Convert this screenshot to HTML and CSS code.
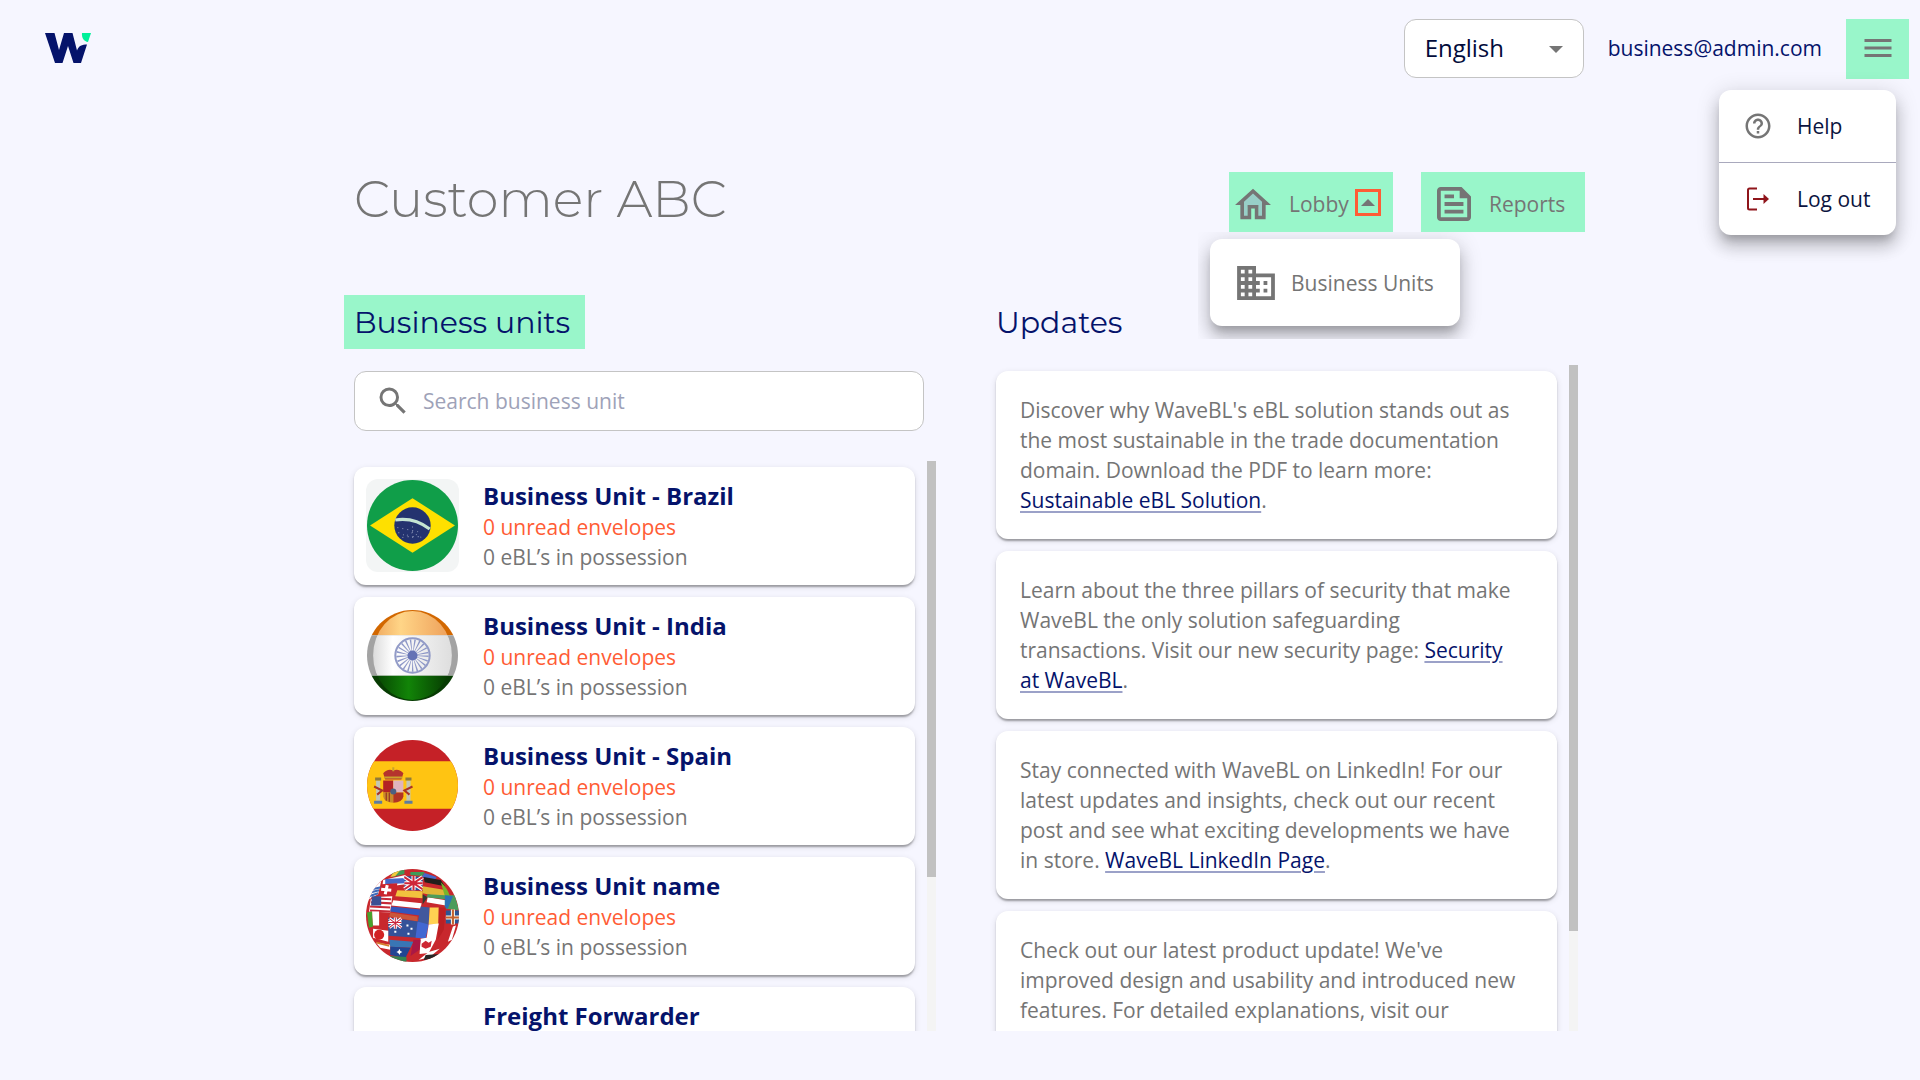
FILE: index.html
```html
<!DOCTYPE html>
<html lang="en">
<head>
    <meta charset="UTF-8">
    <meta name="viewport" content="width=device-width, initial-scale=1.0">
    <title>Customer ABC - Lobby</title>
    <link rel="stylesheet" href="styles.css">
</head>
<body>
    <header class="topbar">
        <a href="#" class="logo" aria-label="Home">
            <svg width="46" height="30" viewBox="0 0 46 30">
                <path fill="#05136b" d="M0 0h9.5L14 17 19 0h8.500L32 17.500C33.500 13 37 11.500 42 11.500L36 30h-7.500L23 13 17.500 30H10z"/>
                <path fill="#00f09a" d="M37 0h9l-3 9c-4-.5-6.500-4-6-9z"/>
            </svg>
        </a>
        <div class="account">
            <div class="language">
                <select aria-label="Language">
                    <option>English</option>
                </select>
                <svg width="14" height="7" viewBox="0 0 14 7"><path d="M0 0h14L7 7z"/></svg>
            </div>
            <span class="email">business@admin.com</span>
            <div class="menu-wrap">
                <button class="menu-btn" aria-label="Menu">
                    <svg width="36" height="36" viewBox="0 0 24 24"><path d="M3 18h18v-2H3v2zm0-5h18v-2H3v2zm0-7v2h18V6H3z"/></svg>
                </button>
                <div class="user-menu">
                    <a href="#">
                        <svg width="30" height="30" viewBox="0 0 24 24"><path d="M11 18h2v-2h-2v2zm1-16C6.480 2 2 6.480 2 12s4.480 10 10 10 10-4.480 10-10S17.520 2 12 2zm0 18c-4.410 0-8-3.590-8-8s3.590-8 8-8 8 3.590 8 8-3.590 8-8 8zm0-14c-2.210 0-4 1.790-4 4h2c0-1.100.9-2 2-2s2 .9 2 2c0 2-3 1.750-3 5h2c0-2.250 3-2.500 3-5 0-2.210-1.790-4-4-4z"/></svg>
                        Help
                    </a>
                    <a href="#">
                        <svg width="30" height="30" viewBox="0 0 30 30"><path fill="none" stroke="#8f151b" stroke-width="2" d="M14 4.500H6.500Q5 4.500 5 6v18Q5 25.500 6.500 25.500H14M10 15h12"/><path fill="#8f151b" d="M20.500 10l5.500 5-5.500 5z"/></svg>
                        Log out
                    </a>
                </div>
            </div>
        </div>
    </header>

    <main>
        <div class="title-row">
            <h1>Customer ABC</h1>
            <nav>
                <div class="nav-item lobby">
                    <a href="#">
                        <svg width="36" height="32" viewBox="2 3 20 17"><path fill="#98cfc8" d="M12 4l7 7v8h-4v-6H9v6H5v-8z"/><path d="M12 5.690l5 4.500V18h-2v-6H9v6H7v-7.810l5-4.500M12 3L2 12h3v8h6v-6h2v6h6v-8h3L12 3z"/></svg>
                        Lobby
                    </a>
                    <button class="caret" aria-label="Show lobby pages">
                        <svg width="14" height="7" viewBox="0 0 14 7"><path d="M0 7h14L7 0z"/></svg>
                    </button>
                    <div class="submenu">
                        <a href="#">
                            <svg width="38" height="34" viewBox="2 3 20 18"><path d="M12 7V3H2v18h20V7H12zM6 19H4v-2h2v2zm0-4H4v-2h2v2zm0-4H4V9h2v2zm0-4H4V5h2v2zm4 12H8v-2h2v2zm0-4H8v-2h2v2zm0-4H8V9h2v2zm0-4H8V5h2v2zm10 12h-8v-2h2v-2h-2v-2h2v-2h-2V9h8v10zm-2-8h-2v2h2v-2zm0 4h-2v2h2v-2z"/></svg>
                            Business Units
                        </a>
                    </div>
                </div>
                <div class="nav-item reports">
                    <a href="#">
                        <svg width="34" height="34" viewBox="3 3 18 18"><path d="M16 3H5c-1.100 0-2 .9-2 2v14c0 1.100.9 2 2 2h14c1.100 0 2-.9 2-2V8l-5-5zm3 16H5V5h10v4h4v10zM7 17h10v-2H7v2zm5-10H7v2h5V7zm-5 6h10v-2H7v2z"/></svg>
                        Reports
                    </a>
                </div>
            </nav>
        </div>

        <div class="columns">
            <section class="units">
                <h2 class="marked">Business units</h2>
                <label class="search">
                    <svg width="36" height="36" viewBox="0 0 24 24"><path d="M15.500 14h-.79l-.28-.27A6.471 6.471 0 0 0 16 9.500 6.500 6.500 0 1 0 9.500 16c1.610 0 3.090-.59 4.230-1.570l.27.28v.79l5 4.990L20.490 19l-4.990-5zm-6 0C7.010 14 5 11.990 5 9.500S7.010 5 9.500 5 14 7.010 14 9.500 11.990 14 9.500 14z"/></svg>
                    <input type="text" placeholder="Search business unit" aria-label="Search business unit">
                </label>
                <div class="scroll-area">
                    <div class="list">
                        <article class="card unit">
                            <svg class="flag brazil" viewBox="0 0 92 92">
                                <circle cx="46" cy="46" r="45" fill="#109e49"/>
                                <path fill="#fee000" d="M4 46l42-27 42 27-42 27z"/>
                                <circle cx="46" cy="46" r="18" fill="#24336f"/>
                                <path fill="none" stroke="#c5e5d3" stroke-width="3" d="M29 40.500c13-2 25 2 34 9"/>
                                <path fill="none" stroke="#8b95b8" stroke-width="1" stroke-dasharray="1 4" d="M31 48l10 2 14 3M32 53l9 4 15 0M36 58l10-5 11 6M46 47v14"/>
                            </svg>
                            <div>
                                <h3>Business Unit - Brazil</h3>
                                <p class="unread">0 unread envelopes</p>
                                <p>0 eBL’s in possession</p>
                            </div>
                        </article>
                        <article class="card unit">
                            <svg class="flag" viewBox="0 0 92 92">
                                <defs>
                                    <clipPath id="disc"><circle cx="46" cy="46" r="45"/></clipPath>
                                    <clipPath id="lens"><ellipse cx="46" cy="46" rx="39" ry="44"/></clipPath>
                                    <linearGradient id="saffron"><stop offset="0" stop-color="#efa75d"/><stop offset=".35" stop-color="#ffd587"/><stop offset="1" stop-color="#ed9d58"/></linearGradient>
                                    <linearGradient id="silver"><stop offset="0" stop-color="#dcdcdc"/><stop offset=".25" stop-color="#fff"/><stop offset="1" stop-color="#dedede"/></linearGradient>
                                    <linearGradient id="green"><stop offset="0" stop-color="#063f02"/><stop offset=".45" stop-color="#128408"/><stop offset="1" stop-color="#053501"/></linearGradient>
                                </defs>
                                <g clip-path="url(#disc)">
                                    <path fill="#d26700" d="M0 0h92v26H0z"/>
                                    <path fill="#a3a3a3" d="M0 26h92v40H0z"/>
                                    <path fill="#073c03" d="M0 66h92v26H0z"/>
                                </g>
                                <g clip-path="url(#lens)">
                                    <path fill="url(#saffron)" d="M7 0h78v26H7z"/>
                                    <path fill="url(#silver)" d="M7 26h78v40H7z"/>
                                    <path fill="url(#green)" d="M7 66h78v26H7z"/>
                                </g>
                                <circle cx="46" cy="46" r="17" fill="none" stroke="#929bc7" stroke-width="2"/>
                                <circle cx="46" cy="46" r="10" fill="none" stroke="#8d97c7" stroke-width="12" stroke-dasharray="1 2"/>
                                <circle cx="46" cy="46" r="5" fill="#6573b5"/>
                            </svg>
                            <div>
                                <h3>Business Unit - India</h3>
                                <p class="unread">0 unread envelopes</p>
                                <p>0 eBL’s in possession</p>
                            </div>
                        </article>
                        <article class="card unit">
                            <svg class="flag" viewBox="0 0 92 92">
                                <g clip-path="url(#disc)">
                                    <path fill="#c52127" d="M0 0h92v92H0z"/>
                                    <path fill="#ffc412" d="M0 22h92v47H0z"/>
                                </g>
                                <path fill="#b5332d" d="M17 34q4-5 10-3 6-2 10 3l-2 6H19z"/>
                                <path fill="#caa22c" d="M18 37h18v2H18zM26 28h2v4h-2z"/>
                                <path fill="#b32224" d="M17 41h10v12H17z"/>
                                <path fill="#dfb4bd" d="M27 41h10v12H27z"/>
                                <path fill="#c98a2b" d="M17 53h10v10q-9 0-10-6z"/>
                                <path fill="#b13425" d="M27 53h10v4q-1 6-10 6z"/>
                                <path stroke="#8d2420" stroke-width="1" d="M20 53v8M23 53v9"/>
                                <circle cx="27" cy="52" r="3" fill="#4b6082"/>
                                <path fill="#c3c6b4" d="M10 41h4v20h-4zM40 41h4v20h-4z"/>
                                <path fill="#8f7a3b" d="M9 38h6v3H9zM39 38h6v3h-6z"/>
                                <path fill="#5d7ca0" d="M8 61h8v3H8zM38 61h8v3h-8z"/>
                                <path fill="none" stroke="#a93327" stroke-width="2" d="M8 47l8 4-5 4M46 47l-8 4 5 4"/>
                            </svg>
                            <div>
                                <h3>Business Unit - Spain</h3>
                                <p class="unread">0 unread envelopes</p>
                                <p>0 eBL’s in possession</p>
                            </div>
                        </article>
                        <article class="card unit">
                            <svg class="flag" viewBox="0 0 92 92">
                                <clipPath id="globe"><circle cx="46" cy="46" r="46"/></clipPath>
                                <g clip-path="url(#globe)">
                                    <path fill="#c8282d" d="M0 0h92v92H0z"/>
                                    <path fill="#3f9a58" d="M24 0h14v5l-12 3zM44 3h14l-2 4-12-1z"/>
                                    <path fill="#f5c93a" d="M30 0h5l-6 7-5 1z"/>
                                    <path fill="#fff" d="M17 11l22-5v9L16 18z"/>
                                    <path fill="#4668c8" d="M19 10l20-1v5l-20 1zM58 4l12 4-3 4-12-4z"/>
                                    <path fill="#2e4e96" d="M38 7l18 1v13H38z"/>
                                    <path stroke="#fff" stroke-width="4" d="M38 8l18 12M56 8L38 20M47 7v14M38 14h18"/>
                                    <path stroke="#cf2538" stroke-width="2" d="M38 8l18 12M56 8L38 20M47 7v14M38 14h18"/>
                                    <path fill="#221f1c" d="M57 8l17 3 4 6-20-4z"/>
                                    <path fill="#e0b637" d="M56 17l24 4v8l-24-5z"/>
                                    <path fill="#78b52b" d="M74 13q7 6 9 14h-5z"/>
                                    <path fill="#fff" d="M1 27q4-10 14-15l-3 13-9 5z"/>
                                    <path stroke="#4069b9" stroke-width="2" d="M6 20l9-2M5 23l8-2M3 27l9-3"/>
                                    <path fill="#c9242d" d="M15 15l16-1-2 13-17 1z"/>
                                    <path stroke="#fff" stroke-width="3" d="M21 16l-2 9M15 20l10 1"/>
                                    <path fill="#f2c33e" d="M31 21l25 1v7l-27-2z"/>
                                    <path fill="#353a31" d="M56 25l5 3-5 7z"/>
                                    <path fill="#fff" d="M61 28l18 3v5l-19-3z"/>
                                    <path fill="#4d9c5b" d="M61 25l17 1v4l-18-2zM78 26l10 0 4 15-14-2z"/>
                                    <path fill="#2b73b6" d="M78 26l8 1-5 12h-3z"/>
                                    <path fill="#fff" d="M5 28l21-1-2 16-21-1z"/>
                                    <path stroke="#c62a38" stroke-width="2" d="M5 29l20 1M5 33l20 1M4 37l20 1M4 41l20 1"/>
                                    <path fill="#3b4f94" d="M6 27h9v9H5z"/>
                                    <path fill="#fff" d="M27 31l28 3-1 5-29-3z"/>
                                    <path fill="#3356bd" d="M25 37l29 3-1 6-29-4z"/>
                                    <path fill="#ca563a" d="M24 43l27 4v5l-28-5z"/>
                                    <path fill="#41589d" d="M54 37l9 1-1 17-11-1z"/>
                                    <path fill="#ffd152" d="M63 38h9v17H62z"/>
                                    <path fill="#bc2024" d="M72 38h7l-2 22-6 10z"/>
                                    <path fill="#2c5595" d="M79 41h13v13H79z"/>
                                    <path stroke="#f6f5ed" stroke-width="4" d="M86 40v15M79 48h13"/>
                                    <path stroke="#c5622e" stroke-width="2" d="M86 40v15M79 48h13"/>
                                    <path fill="#48a12d" d="M1 43l5-1 1 15-4 1z"/>
                                    <path fill="#fff" d="M6 42h7v14H7z"/>
                                    <path fill="#355299" d="M22 48l30 4-1 16-29-2z"/>
                                    <path stroke="#fff" stroke-width="3" d="M23 49l12 9M35 49l-12 9M29 48v11M22 53h13"/>
                                    <path stroke="#c9243b" stroke-width="1" d="M23 49l12 9M35 49l-12 9M29 48v11M22 53h13"/>
                                    <path fill="#fff" d="M40 55h2v2h-2zM44 58h2v2h-2zM28 61h2v2h-2zM41 63h2v2h-2zM7 59l15 2v11l-15-4z"/>
                                    <circle cx="13" cy="65" r="5" fill="#d12223"/>
                                    <path fill="#4267d2" d="M51 52l11 3-3 14-10-1z"/>
                                    <path fill="#fff" d="M62 55l10-1-3 16-7 13-9 1 1-15 6-1zM86 57l3-1-4 14-4 2z"/>
                                    <path fill="#cd2733" d="M59 71l3 2 3-2-1 6-5 2-4-2v-3z"/>
                                    <path fill="#fff" d="M10 73l14 2v5l-10-2z"/>
                                    <path fill="#d57d2c" d="M10 72l13 3v2l-12-3z"/>
                                    <path fill="#3976b5" d="M23 70l24 2-3 6-20-1z"/>
                                    <path fill="#214593" d="M24 77l20 1-5 10-15-3z"/>
                                    <path fill="#fff" d="M33 79l1 2 2 1-2 1-1 2-1-2-2-1 2-1zM62 82l11-3-10 8-11 3z"/>
                                    <path fill="#a91845" d="M47 70h7l-1 10-9 6z"/>
                                    <path fill="#348552" d="M24 86l16 1v5H24z"/>
                                    <path fill="#262626" d="M59 85l14-1-8 5-8 1z"/>
                                </g>
                            </svg>
                            <div>
                                <h3>Business Unit name</h3>
                                <p class="unread">0 unread envelopes</p>
                                <p>0 eBL’s in possession</p>
                            </div>
                        </article>
                        <article class="card unit">
                            <div class="flag"></div>
                            <div>
                                <h3>Freight Forwarder</h3>
                            </div>
                        </article>
                    </div>
                    <div class="scrollbar"><div class="thumb units-thumb"></div></div>
                </div>
            </section>

            <section class="updates">
                <h2>Updates</h2>
                <div class="scroll-area">
                    <div class="list">
                        <article class="card update">Discover why WaveBL's eBL solution stands out as the most sustainable in the trade documentation domain. Download the PDF to learn more: <a href="#">Sustainable eBL Solution</a>.</article>
                        <article class="card update">Learn about the three pillars of security that make WaveBL the only solution safeguarding transactions. Visit our new security page: <a href="#">Security at WaveBL</a>.</article>
                        <article class="card update">Stay connected with WaveBL on LinkedIn! For our latest updates and insights, check out our recent post and see what exciting developments we have in store. <a href="#">WaveBL LinkedIn Page</a>.</article>
                        <article class="card update">Check out our latest product update! We've improved design and usability and introduced new features. For detailed explanations, visit our</article>
                    </div>
                    <div class="scrollbar"><div class="thumb updates-thumb"></div></div>
                </div>
            </section>
        </div>
    </main>
</body>
</html>
```
FILE: styles.css
```css
* {
    box-sizing: border-box;
}
body {
    font-family: 'Open Sans', 'Noto Sans', sans-serif;
    font-size: 21px;
    line-height: 30px;
    background-color: #f6f6ff;
    color: #757575;
    margin: 0;
    height: 100vh;
    display: flex;
    flex-direction: column;
}
h1, h2, h3, p {
    margin: 0;
}
a {
    color: inherit;
    text-decoration: none;
}
button {
    padding: 0;
    border: none;
    cursor: pointer;
}
svg {
    display: block;
    flex-shrink: 0;
    fill: #757575;
}

/* top bar */
.topbar {
    display: flex;
    justify-content: space-between;
    padding: 19px 11px 0 45px;
}
.logo {
    padding-top: 14px;
}
.account {
    display: flex;
    align-items: flex-start;
    gap: 24px;
    color: #05136b;
}
.email {
    line-height: 58px;
}
.language {
    position: relative;
}
.language select {
    appearance: none;
    display: block;
    width: 180px;
    height: 59px;
    padding: 0 20px 2px;
    border: 1px solid #c4c4c4;
    border-radius: 12px;
    background-color: #fff;
    color: #020b3b;
    font-family: inherit;
    font-size: 24px;
}
.language svg {
    position: absolute;
    right: 21px;
    top: 27px;
    pointer-events: none;
}
.menu-wrap {
    position: relative;
}
.menu-btn {
    display: flex;
    align-items: center;
    justify-content: center;
    width: 63px;
    height: 60px;
    padding-bottom: 2px;
    background-color: #99f6ca;
}
.user-menu {
    position: absolute;
    top: 71px;
    right: 13px;
    width: 177px;
    border-radius: 12px;
    background-color: #fff;
    box-shadow: 0 8px 8px -4px rgba(0, 0, 0, 0.2), 0 12px 15px 2px rgba(0, 0, 0, 0.14), 0 4px 21px 3px rgba(0, 0, 0, 0.12);
}
.user-menu a {
    display: flex;
    align-items: center;
    gap: 24px;
    height: 72px;
    padding-left: 24px;
    color: #0b1440;
    white-space: nowrap;
}
.user-menu a + a {
    height: 73px;
    border-top: 1px solid #a9a9bd;
}

/* main area */
main {
    flex: 1;
    min-height: 0;
    width: 100%;
    max-width: 1252px;
    margin: 0 auto;
    padding: 93px 0 49px 20px;
    display: flex;
    flex-direction: column;
}
.title-row {
    display: flex;
    justify-content: space-between;
    align-items: flex-start;
    margin-bottom: 63px;
    padding-right: 1px;
}
h1 {
    font-family: Montserrat, Lato, sans-serif;
    font-size: 51px;
    font-weight: 300;
    line-height: 54px;
}
nav {
    display: flex;
    gap: 28px;
}
.nav-item {
    position: relative;
    display: flex;
    align-items: center;
    width: 164px;
    height: 60px;
    padding: 4px 0 0 6px;
    background-color: #99f6ca;
}
.nav-item a {
    display: flex;
    align-items: center;
    gap: 18px;
}
.reports {
    padding-left: 16px;
}
.caret {
    display: flex;
    align-items: center;
    justify-content: center;
    width: 26px;
    height: 27px;
    margin: 0 0 4px 6px;
    border: 3px solid #ff5c35;
    background-color: transparent;
}
.submenu {
    position: absolute;
    z-index: 1;
    top: 60px;
    left: -31px;
    padding: 7px 30px 13px 12px;
    overflow: hidden;
}
.submenu a {
    width: 250px;
    height: 87px;
    padding-left: 27px;
    gap: 16px;
    border-radius: 12px;
    background-color: #fff;
    box-shadow: 0 8px 8px -4px rgba(0, 0, 0, 0.2), 0 12px 15px 2px rgba(0, 0, 0, 0.14), 0 4px 21px 3px rgba(0, 0, 0, 0.12);
    white-space: nowrap;
}
.columns {
    flex: 1;
    min-height: 0;
    display: grid;
    grid-template-columns: 1fr 1fr;
    grid-template-rows: 100%;
    gap: 60px;
    padding-right: 8px;
}
section {
    display: flex;
    flex-direction: column;
    min-width: 0;
}
h2 {
    align-self: flex-start;
    padding-top: 2px;
    font-family: Montserrat, Lato, sans-serif;
    font-size: 30px;
    font-weight: 400;
    line-height: 52px;
    color: #05136b;
}
.marked {
    margin-left: -10px;
    padding: 2px 15px 0 10px;
    background-color: #99f6ca;
}
.search {
    display: flex;
    align-items: center;
    gap: 12px;
    height: 60px;
    margin: 22px 12px 22px 0;
    padding: 0 20px;
    border: 1px solid #c4c4c4;
    border-radius: 12px;
    background-color: #fff;
}
.search input {
    flex: 1;
    min-width: 0;
    padding: 0;
    border: none;
    outline: none;
    background: none;
    color: #05136b;
    font-family: inherit;
    font-size: 21px;
}
.search input::placeholder {
    color: #9ea2b8;
}

/* scrolling lists */
.scroll-area {
    flex: 1;
    min-height: 0;
    display: flex;
    margin: 8px 0 0 -12px;
}
.list {
    flex: 1;
    overflow-y: auto;
    scrollbar-width: none;
    display: flex;
    flex-direction: column;
    gap: 12px;
    padding: 6px 12px 0 12px;
}
.scrollbar {
    width: 9px;
    background-color: #f4f4f4;
}
.thumb {
    background-color: #c1c1c1;
}
.units-thumb {
    height: 73%;
}
.updates-thumb {
    height: 85%;
}
.updates .scroll-area {
    margin-top: 16px;
}
.card {
    flex-shrink: 0;
    border-radius: 12px;
    background-color: #fff;
    box-shadow: 0 3px 2px -1px rgba(0, 0, 0, 0.2), 0 2px 2px rgba(0, 0, 0, 0.14), 0 2px 6px rgba(0, 0, 0, 0.12);
}
.unit {
    display: flex;
    gap: 24px;
    height: 118px;
    padding: 12px;
}
.flag {
    flex-shrink: 0;
    width: 93px;
    height: 93px;
    border-radius: 12px;
}
.brazil {
    background-color: #f3f5f5;
}
.unit h3 {
    font-size: 24px;
    line-height: 33px;
    color: #05136b;
}
.unread {
    color: #ff5c35;
}
.update {
    padding: 24px 32px 24px 24px;
}
.update a {
    color: #05136b;
    text-decoration: underline;
    text-decoration-color: #9ba1c8;
    text-decoration-thickness: 2px;
    text-underline-offset: 3px;
}
```
